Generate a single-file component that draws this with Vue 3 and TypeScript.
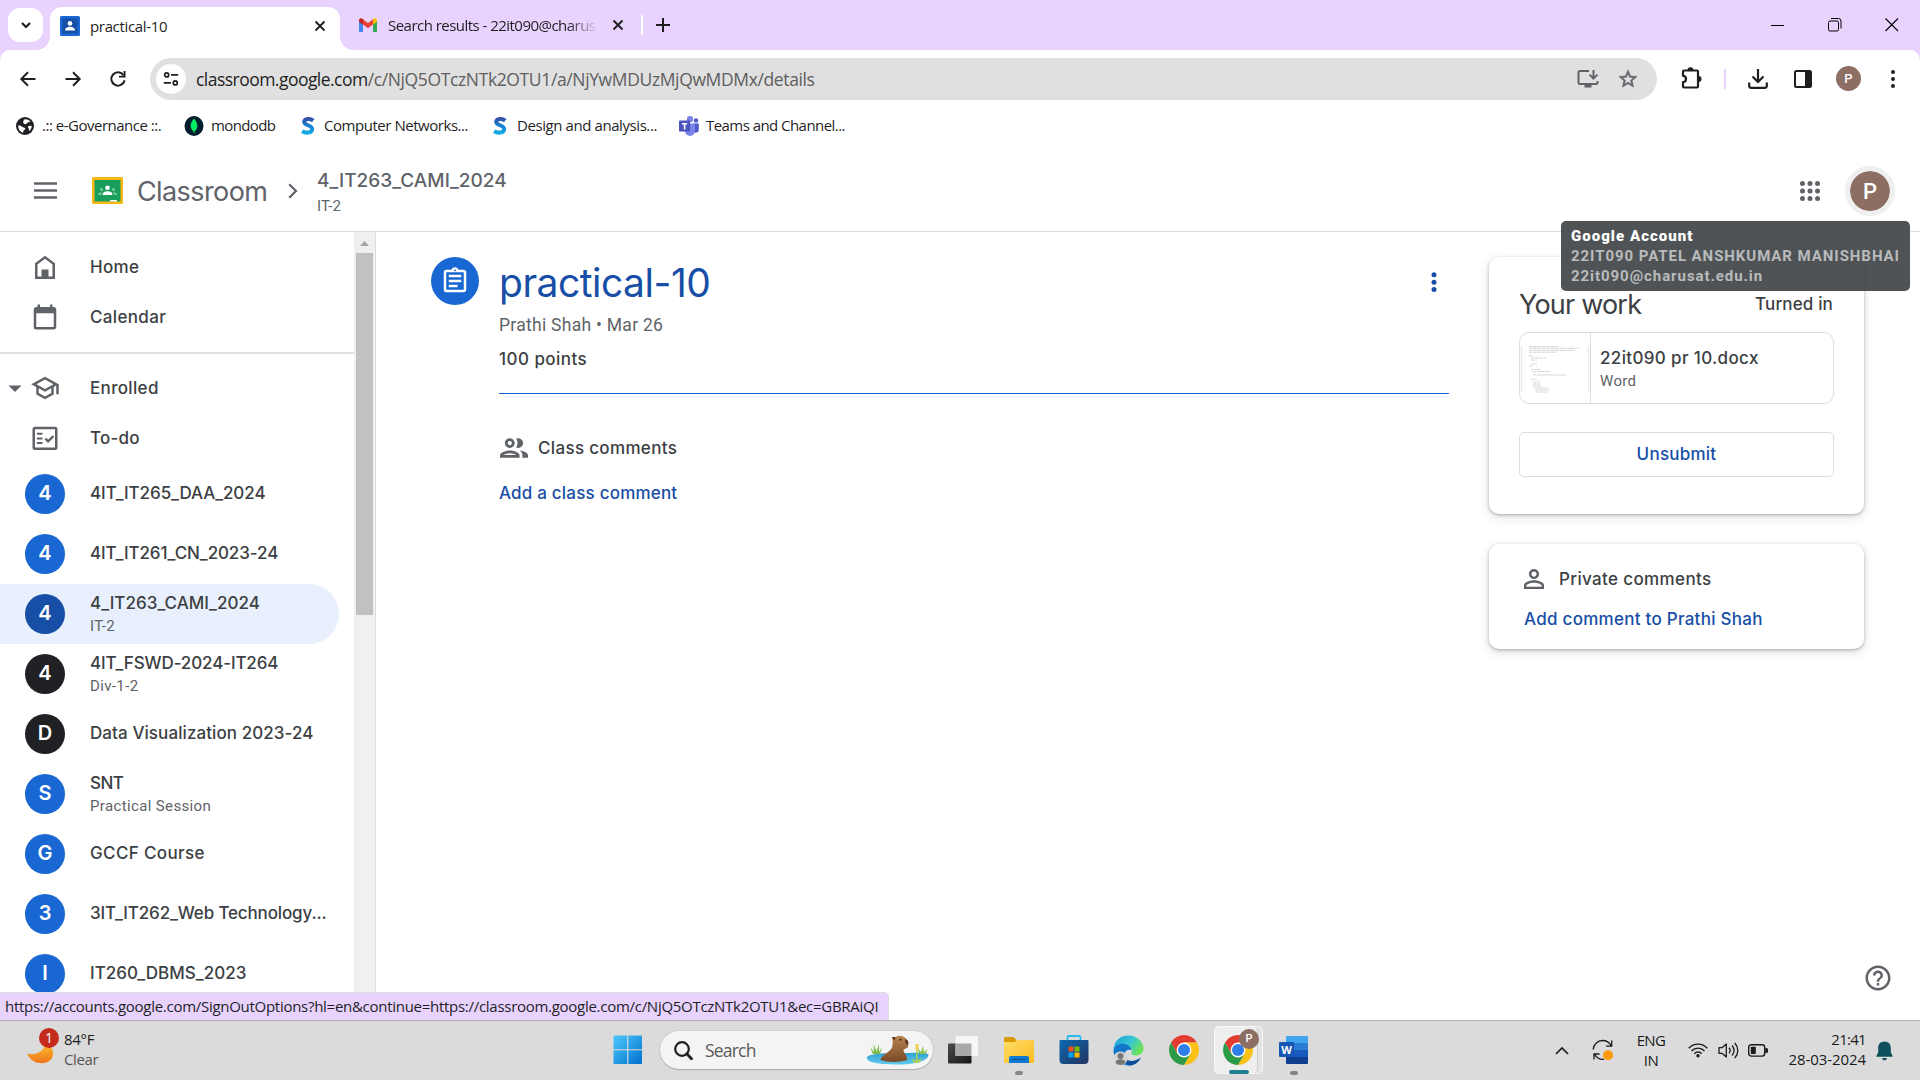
<script setup lang="ts">
interface Course {
  letter: string
  name: string
  sub?: string
  color: string
  spacing: number
  active?: boolean
}

const courses: Course[] = [
  { letter: '4', name: '4IT_IT265_DAA_2024', color: '#1967d2', spacing: -0.08 },
  { letter: '4', name: '4IT_IT261_CN_2023-24', color: '#1967d2', spacing: -0.1 },
  { letter: '4', name: '4_IT263_CAMI_2024', sub: 'IT-2', color: '#174ea6', spacing: 0.03, active: true },
  { letter: '4', name: '4IT_FSWD-2024-IT264', sub: 'Div-1-2', color: '#202124', spacing: -0.13 },
  { letter: 'D', name: 'Data Visualization 2023-24', color: '#202124', spacing: 0.08 },
  { letter: 'S', name: 'SNT', sub: 'Practical Session', color: '#1967d2', spacing: -0.6 },
  { letter: 'G', name: 'GCCF Course', color: '#1967d2', spacing: 0.36 },
  { letter: '3', name: '3IT_IT262_Web Technology...', color: '#1967d2', spacing: -0.14 },
  { letter: 'I', name: 'IT260_DBMS_2023', color: '#1967d2', spacing: 0.03 },
]

const gridDots = [4, 12, 20]
</script>

<template>
  <div class="screen">
    <!-- Tab strip -->
    <div class="tabs">
      <div class="tab-search">
        <svg width="12" height="12" viewBox="0 0 12 12"><path d="M2 4l4 4 4-4" fill="none" stroke="#1f1f1f" stroke-width="2.2" /></svg>
      </div>
      <div class="tab active-tab">
        <svg class="fav" width="20" height="20" viewBox="0 0 20 20">
          <rect width="20" height="20" rx="1.5" fill="#1967d2" /><rect x="2.5" y="2.5" width="15" height="15" fill="#174ea6" />
          <circle cx="10" cy="7.4" r="2.3" fill="#fff" /><path d="M5 14.5c0-2.6 2.6-3.7 5-3.7s5 1.1 5 3.7z" fill="#fff" />
        </svg>
        <span class="tab-title t1">practical-10</span>
        <svg class="x" width="12" height="12" viewBox="0 0 12 12"><path d="M1.5 1.5l9 9m0-9l-9 9" stroke="#1f1f1f" stroke-width="1.9" /></svg>
      </div>
      <div class="tab idle-tab">
        <svg class="fav" width="20" height="20" viewBox="0 0 20 20">
          <path d="M1 5v11.2c0 .5.4.8.8.8H5V8.6z" fill="#4285f4" /><path d="M19 5v11.2c0 .5-.4.8-.8.8H15V8.6z" fill="#34a853" />
          <path d="M5 4.2v5.4l5 3.7 5-3.7V4.2l-5 3.9z" fill="#ea4335" />
          <path d="M1 5v1.8l4 3V4.2l-.7-.5C2.900 2.700 1 3.500 1 5z" fill="#c5221f" />
          <path d="M19 5v1.800l-4 3V4.200l.7-.5C17.100 2.700 19 3.500 19 5z" fill="#fbbc04" />
        </svg>
        <span class="tab-title t2">Search results - 22it090@charus</span>
        <svg class="x" width="12" height="12" viewBox="0 0 12 12"><path d="M1.500 1.500l9 9m0-9l-9 9" stroke="#1f1f1f" stroke-width="1.900" /></svg>
      </div>
      <i class="tab-sep"></i>
      <svg class="plus" width="14" height="14" viewBox="0 0 14 14"><path d="M7 0v14M0 7h14" stroke="#1f1f1f" stroke-width="2" /></svg>
      <div class="win">
        <svg width="14" height="14" viewBox="0 0 14 14"><path d="M0 7.500h13" stroke="#000" /></svg>
        <svg width="14" height="14" viewBox="0 0 14 14"><g fill="none" stroke="#000"><rect x=".5" y="3" width="10" height="10" rx="1.500" /><path d="M3 .5h7.500a2.500 2.500 0 0 1 2.500 2.500v7.500" /></g></svg>
        <svg width="14" height="14" viewBox="0 0 14 14"><path d="M.5 .5l12.500 12.500M13 .5L.5 13" stroke="#000" stroke-width="1.100" /></svg>
      </div>
    </div>

    <!-- Toolbar -->
    <div class="toolbar">
      <div class="nav">
        <svg width="18" height="18" viewBox="0 0 18 18"><path d="M16.500 9H2.500M9 2.300L2.300 9 9 15.700" fill="none" stroke="#1f1f1f" stroke-width="2" /></svg>
        <svg width="18" height="18" viewBox="0 0 18 18"><path d="M1.500 9h14M9 2.300L15.700 9 9 15.700" fill="none" stroke="#1f1f1f" stroke-width="2" /></svg>
        <svg width="18" height="18" viewBox="0 0 18 18"><path d="M14.600 5.200A6.700 6.700 0 1 0 15.600 10.300" fill="none" stroke="#1f1f1f" stroke-width="2" /><path d="M16.500 1v6.600H10V5.700h4.600V1z" fill="#1f1f1f" /></svg>
      </div>
      <div class="omnibox">
        <span class="site-info">
          <svg width="16" height="16" viewBox="0 0 16 16"><g fill="none" stroke="#1f1f1f" stroke-width="1.700"><circle cx="3.700" cy="3.900" r="2" /><path d="M8 3.900h7.200M.8 11.900H8" /><circle cx="12.300" cy="11.900" r="2" /></g></svg>
        </span>
        <span class="url"><b>classroom.google.com</b>/c/NjQ5OTczNTk2OTU1/a/NjYwMDUzMjQwMDMx/details</span>
        <svg class="install" width="22" height="20" viewBox="0 0 22 20">
          <path d="M12 2H3a1.500 1.500 0 0 0-1.500 1.500v10A1.500 1.500 0 0 0 3 15h16a1.500 1.500 0 0 0 1.500-1.500V12" fill="none" stroke="#5f6368" stroke-width="2" />
          <path d="M7.500 15h7v3.500h-7z" fill="#5f6368" /><path d="M16.500 1v8M12.500 5.600l4 4 4-4" fill="none" stroke="#5f6368" stroke-width="2" />
        </svg>
        <svg class="star" width="22" height="22" viewBox="0 0 24 24"><path fill="#5f6368" stroke="#5f6368" stroke-width=".5" d="M22 9.240l-7.190-.62L12 2 9.190 8.630 2 9.240l5.460 4.730L5.820 21 12 17.270 18.180 21l-1.630-7.030L22 9.240zM12 15.400l-3.760 2.270 1-4.280-3.320-2.880 4.380-.38L12 6.100l1.710 4.040 4.380.38-3.320 2.880 1 4.280L12 15.400z" /></svg>
      </div>
      <div class="tools">
        <svg class="ext" width="24" height="24" viewBox="0 0 24 24"><path d="M4 5.500a1 1 0 0 1 1-1h13a1 1 0 0 1 1 1v15a1 1 0 0 1-1 1H5a1 1 0 0 1-1-1v-4.200c4-.7 4-5.900 0-6.600z" fill="none" stroke="#1f1f1f" stroke-width="2.200" /><path d="M8.500 4.200a3 3 0 0 1 6 0zM19.500 10a3 3 0 0 1 0 6z" fill="#1f1f1f" /></svg>
        <i class="tool-sep"></i>
        <svg class="dl" width="20" height="20" viewBox="0 0 20 20"><path d="M10 0v12M4.500 7.500L10 13l5.500-5.500M1.200 13.500v3.300a2 2 0 0 0 2 2h13.600a2 2 0 0 0 2-2v-3.300" fill="none" stroke="#1f1f1f" stroke-width="2.200" /></svg>
        <svg class="panel" width="18" height="18" viewBox="0 0 18 18"><rect x="1" y="1" width="16" height="16" rx="1.500" fill="none" stroke="#1f1f1f" stroke-width="2" /><path d="M11 1h6v16h-6z" fill="#1f1f1f" /></svg>
        <span class="mini-avatar">P</span>
        <svg class="kebab" width="6" height="20" viewBox="0 0 6 20"><g fill="#1f1f1f"><circle cx="3" cy="3" r="2" /><circle cx="3" cy="10" r="2" /><circle cx="3" cy="17" r="2" /></g></svg>
      </div>
    </div>

    <!-- Bookmarks -->
    <div class="bookmarks">
      <span class="bm b1"><svg width="18" height="18" viewBox="0 0 18 18"><circle cx="9" cy="9" r="9" fill="#202124" /><path d="M2.200 8.500c1.800-.3 2.800.2 4 1.300.9.900 2.300.6 2.900 1.400.6.800-.3 1.400-1.100 2-.8.600-.6 1.500-.8 2.600C4.200 15 2 12 2.200 8.500zM8.500 2.200C11 2 13 2.800 14.500 4.500l-2.300.7c-1.300.4-1.200 1.700-2.400 1.900-1.400.2-2.600-.6-2.600-2.100 0-1.200.6-1.800 1.300-2.800zM12 9.500c1-.9 2.600-.8 3.800-.3-.2 1.900-1 3.500-2.500 4.700-.6-1.200-.2-1.400-.6-2.300-.3-.7-1.100-1.200-.7-2.100z" fill="#fff" /></svg><span>.:: e-Governance ::.</span></span>
      <span class="bm b2"><svg width="20" height="20" viewBox="0 0 20 20"><ellipse cx="10" cy="10" rx="9.500" ry="10" fill="#001e2b" /><path d="M10 2.500c-2.300 2.700-3.300 5-3.300 7.200 0 2.500 1.200 4.300 2.800 5.600l.3 2.200h.5l.3-2.200c1.600-1.300 2.700-3.100 2.700-5.600 0-2.200-1-4.500-3.300-7.200z" fill="#00ed64" /></svg><span>mondodb</span></span>
      <span class="bm b3"><svg width="16" height="20" viewBox="0 0 16 20"><defs><linearGradient id="sg" gradientUnits="userSpaceOnUse" x1="0" y1="0" x2="0" y2="19"><stop offset="0" stop-color="#3b3f9c" /><stop offset=".5" stop-color="#1580d0" /><stop offset="1" stop-color="#10b7e8" /></linearGradient></defs><path d="M13.200 4.600C10.500 2.600 4.600 2.200 4.200 5.900 4 9.600 12.300 8.900 12.200 13.200 12.100 17.200 5.500 17.400 2 15.300" fill="none" stroke="url(#sg)" stroke-width="4" /></svg><span>Computer Networks...</span></span>
      <span class="bm b4"><svg width="16" height="20" viewBox="0 0 16 20"><path d="M13.200 4.600C10.500 2.600 4.600 2.200 4.200 5.900 4 9.600 12.300 8.900 12.200 13.200 12.100 17.200 5.500 17.400 2 15.300" fill="none" stroke="url(#sg)" stroke-width="4" /></svg><span>Design and analysis...</span></span>
      <span class="bm b5"><svg width="20" height="20" viewBox="0 0 20 20"><circle cx="11" cy="3.200" r="3.100" fill="#7b83eb" /><circle cx="17" cy="4.500" r="2.200" fill="#5059c9" /><path d="M14 7.500h5.800v6a3 3 0 0 1-5.800 1.200z" fill="#5059c9" /><path d="M6 7.500h10v7.500a5 5 0 0 1-10 0z" fill="#7b83eb" /><rect y="4.500" width="11" height="11" rx="1" fill="#4b53bc" /><path d="M3 7h5.200v1.500H6.400v5H4.800v-5H3z" fill="#fff" /></svg><span>Teams and Channel...</span></span>
    </div>

    <!-- Classroom header -->
    <header class="head">
      <svg class="burger" width="23" height="17" viewBox="0 0 23 17"><path d="M0 1.500h23M0 8.500h23M0 15.500h23" stroke="#5f6368" stroke-width="2.300" /></svg>
      <svg class="logo" width="31" height="27" viewBox="0 0 31 27">
        <rect width="31" height="27" rx="1.500" fill="#f6b811" /><rect x="2.500" y="3" width="26" height="21.500" fill="#1a9e5c" />
        <circle cx="15.500" cy="10.800" r="2.300" fill="#fff" /><path d="M10.500 18c0-2.800 2.600-3.700 5-3.700s5 .9 5 3.700z" fill="#fff" />
        <g fill="#7cc8a0"><circle cx="9.500" cy="12.500" r="1.600" /><circle cx="21.500" cy="12.500" r="1.600" /><path d="M6 18c0-2 1.600-2.900 4.200-2.700-.9.700-1.200 1.600-1.200 2.700zM25 18c0-2-1.600-2.900-4.200-2.700.9.700 1.200 1.600 1.200 2.700z" /></g>
        <path d="M18 23h7v1.500h-7z" fill="#fff" />
      </svg>
      <span class="brand">Classroom</span>
      <svg class="chev" width="10" height="16" viewBox="0 0 10 16"><path d="M1.200 1.200L8 8l-6.800 6.800" fill="none" stroke="#5f6368" stroke-width="2.200" /></svg>
      <div class="crumb"><span class="c1">4_IT263_CAMI_2024</span><span class="c2">IT-2</span></div>
      <svg class="apps" width="24" height="24" viewBox="0 0 24 24"><g fill="#5f6368"><template v-for="y in gridDots" :key="y"><circle v-for="x in gridDots" :key="x" :cx="x * 0.94 + 0.72" :cy="y * 0.94 + 0.72" r="2.500" /></template></g></svg>
      <span class="avatar">P</span>
    </header>

    <!-- Page body -->
    <div class="body">
      <nav class="side">
        <div class="side-list">
          <div class="row"><svg class="ic" width="30" height="30" viewBox="0 0 24 24"><path d="M5 20.500V9.500L12 4.200l7 5.300v11z" fill="none" stroke="#5f6368" stroke-width="2" /><path d="M9.200 14h5.600v6.500H9.200z" fill="#5f6368" /></svg><span class="r1">Home</span></div>
          <div class="row"><svg class="ic" width="30" height="30" viewBox="0 0 24 24"><path fill="#5f6368" d="M19 4h-1V2h-2v2H8V2H6v2H5c-1.110 0-2 .9-2 2v14a2 2 0 0 0 2 2h14c1.100 0 2-.9 2-2V6c0-1.100-.9-2-2-2zm0 16H5V9h14v11z" /></svg><span class="r1">Calendar</span></div>
          <div class="rule"></div>
          <div class="row enrolled"><svg class="tri" width="14" height="7" viewBox="0 0 14 7"><path d="M.5 .5h13L7 7z" fill="#5f6368" /></svg><svg class="ic" width="30" height="30" viewBox="0 0 24 24"><path fill="#5f6368" d="M12 3L1 9l4 2.180v6L12 21l7-3.820v-6l2-1.090V17h2V9L12 3zm6.820 6L12 12.720 5.180 9 12 5.280 18.820 9zM17 15.990l-5 2.730-5-2.730v-3.720L12 15l5-2.730v3.720z" /></svg><span class="r1">Enrolled</span></div>
          <div class="row"><svg class="ic" width="30" height="30" viewBox="0 0 24 24"><g fill="none" stroke="#5f6368"><rect x="3" y="4" width="18" height="16.500" rx="1" stroke-width="2" /><path d="M5.500 8.500H10M5.500 12.300H10M5.500 16H10" stroke-width="1.600" /><path d="M12.300 12.500l2.200 2.200 4.200-4.200" stroke-width="1.900" /></g></svg><span class="r2">To-do</span></div>
          <div v-for="c in courses" :key="c.name" class="course" :class="{ on: c.active }">
            <span class="disc" :style="{ background: c.color }">{{ c.letter }}</span>
            <span class="names">
              <span class="n1" :style="{ letterSpacing: c.spacing + 'px' }">{{ c.name }}</span>
              <span v-if="c.sub" class="n2">{{ c.sub }}</span>
            </span>
          </div>
        </div>
        <div class="scroll">
          <svg width="21" height="21" viewBox="0 0 21 21"><path d="M6 14l4.500-5 4.500 5z" fill="#a3a3a3" /></svg>
          <div class="thumb"></div>
        </div>
      </nav>

      <main class="main">
        <span class="badge"><svg width="30" height="30" viewBox="0 0 24 24"><path fill="#fff" d="M7 15h7v2H7zm0-4h10v2H7zm0-4h10v2H7zm12-4h-4.180C14.400 1.840 13.300 1 12 1c-1.300 0-2.400.84-2.820 2H5c-.14 0-.27.010-.4.040-.39.080-.74.280-1.010.550-.18.180-.33.400-.43.640-.1.230-.16.490-.16.770v14c0 .270.060.540.160.780s.25.450.430.640c.27.270.620.470 1.010.550.130.020.260.030.4.030h14c1.100 0 2-.9 2-2V5c0-1.100-.9-2-2-2zm-7-.25c.41 0 .75.340.75.750s-.34.750-.75.750-.75-.34-.75-.75.340-.75.750-.75zM19 19H5V5h14v14z" /></svg></span>
        <section class="detail">
          <div class="title-row"><h1>practical-10</h1><svg width="30" height="20" viewBox="0 0 30 20"><g fill="#174ea6"><circle cx="15" cy="2.700" r="2.500" /><circle cx="15" cy="10.200" r="2.500" /><circle cx="15" cy="17.500" r="2.500" /></g></svg></div>
          <div class="by">Prathi Shah • Mar 26</div>
          <div class="points">100 points</div>
          <div class="cc"><svg width="28" height="20" viewBox="2 5 20 14"><path fill="#5f6368" d="M9 13.750c-2.340 0-7 1.170-7 3.500V19h14v-1.750c0-2.330-4.660-3.500-7-3.500zM4.340 17c.84-.58 2.870-1.250 4.660-1.250s3.820.67 4.660 1.250H4.340zM9 12c1.930 0 3.500-1.570 3.500-3.500S10.930 5 9 5 5.500 6.570 5.500 8.500 7.070 12 9 12zm0-5c.83 0 1.500.67 1.500 1.500S9.830 10 9 10s-1.500-.67-1.500-1.500S8.170 7 9 7zm7.040 6.810c1.160.84 1.960 1.960 1.960 3.440V19h4v-1.750c0-2.020-3.500-3.170-5.960-3.440zM15 12c1.930 0 3.500-1.570 3.500-3.500S16.930 5 15 5c-.54 0-1.040.13-1.500.35.63.89 1 1.980 1 3.150s-.37 2.260-1 3.150c.46.22.96.35 1.500.35z" /></svg><span>Class comments</span></div>
          <div class="add">Add a class comment</div>
        </section>
        <aside class="cards">
          <div class="card work">
            <div class="work-head"><span class="yw">Your work</span><span class="ti">Turned in</span></div>
            <div class="file">
              <div class="thumbnail">
                <svg width="70" height="70" viewBox="0 0 70 70">
                  <path d="M1.500 13v46M68.500 13v46" stroke="#ececec" stroke-width="1.500" />
                  <g stroke="#c4c4c4" stroke-width=".7" stroke-dasharray="3 .5 5 .4"><path d="M9 13.500h29M9 15.300h50M9 17.300h46M9 19.200h28M9 23h4M11 25h15M11 27h6M11 31h6M9 33h4M11 36.500h10M13 38.500h17M13 42h33M11 46h6M13 49h7M13 51h7M13 53h9M14 55h15M15 57h14M16 59h12" /></g>
                </svg>
              </div>
              <div class="file-txt"><span class="f1">22it090 pr 10.docx</span><span class="f2">Word</span></div>
            </div>
            <div class="btn">Unsubmit</div>
          </div>
          <div class="card priv">
            <div class="ph"><svg width="30" height="30" viewBox="0 0 24 24"><path fill="#5f6368" d="M12 5.900c1.160 0 2.100.94 2.100 2.100s-.94 2.100-2.100 2.100S9.900 9.160 9.900 8s.94-2.100 2.100-2.100m0 9c2.970 0 6.100 1.460 6.100 2.100v1.100H5.900V17c0-.64 3.130-2.100 6.100-2.100M12 4C9.790 4 8 5.790 8 8s1.790 4 4 4 4-1.790 4-4-1.790-4-4-4zm0 9c-2.670 0-8 1.340-8 4v3h16v-3c0-2.660-5.330-4-8-4z" /></svg><span>Private comments</span></div>
            <div class="pa">Add comment to Prathi Shah</div>
          </div>
        </aside>
      </main>
    </div>

    <!-- Taskbar -->
    <footer class="task">
      <div class="weather">
        <div class="moon">
          <svg width="30" height="38" viewBox="0 0 30 38"><defs><linearGradient id="mg" x1="0" y1="0" x2="0" y2="1"><stop offset="0" stop-color="#f9b92d" /><stop offset="1" stop-color="#f0761b" /></linearGradient></defs><path d="M1 22.500c8 2.500 17-2 18-9 8 0 10 9 6.500 14.500-6 7-20 5.500-24.500-5.500z" fill="url(#mg)" /></svg>
          <span class="count">1</span>
        </div>
        <div class="wtxt"><span class="deg">84°F</span><span class="clr">Clear</span></div>
      </div>
      <div class="center">
        <span class="slot"><svg width="30" height="30" viewBox="0 0 30 30"><defs><linearGradient id="wg" x1="0" y1="0" x2="1" y2="1"><stop offset="0" stop-color="#4dc9fb" /><stop offset="1" stop-color="#0070cf" /></linearGradient></defs><path d="M1.500 .5h12.700v13.700H.5V1.500a1 1 0 0 1 1-1zM15.300 .5H28a1 1 0 0 1 1 1v12.700H15.300zM.5 15.300h13.700V29H1.500a1 1 0 0 1-1-1zM15.300 15.300H29V28a1 1 0 0 1-1 1H15.300z" fill="url(#wg)" /></svg></span>
        <div class="search">
          <svg width="19" height="19" viewBox="0 0 19 19"><circle cx="8" cy="8" r="6.800" fill="none" stroke="#1f1f1f" stroke-width="2.200" /><path d="M12.800 12.800l4.700 5" stroke="#1f1f1f" stroke-width="2.800" stroke-linecap="round" /></svg>
          <span>Search</span>
          <svg class="capy" width="64" height="30" viewBox="0 0 64 30">
            <defs><linearGradient id="cb" x1="0" y1="0" x2="0" y2="1"><stop offset="0" stop-color="#b98350" /><stop offset="1" stop-color="#7a4a26" /></linearGradient><linearGradient id="wt" x1="0" y1="0" x2="0" y2="1"><stop offset="0" stop-color="#2f9fcf" /><stop offset="1" stop-color="#62cbf0" /></linearGradient></defs>
            <path d="M1 22c3-3 14-4 30-4s29-1 31 1c2 3-4 10.500-30 10.500S0 26 1 22z" fill="url(#wt)" />
            <path d="M7 19L4 12l4 5-.5-8 3 7.500L13 9l0 8 3-5-2 7z" fill="#7db843" /><path d="M53 19l-1-6 3 4 2-6 1 6 4-3-3 5z" fill="#8cc34f" />
            <path d="M14.500 25c1.500-6 8.500-7 11-11.500 1.500-2.500 1-4.500 1.200-7.500l-.7-3.500 3.500-.2C32 0 37 .3 40 3.500c2.500 2 2.800 5 2 8.500-1.500 2-4.500 1.500-4.500 3.500 1 3.500 4 5.500 3.500 9.500-7 2.500-20 2.500-26.500 0z" fill="url(#cb)" />
            <circle cx="34.500" cy="4.800" r="1" fill="#2d1a0e" /><path d="M39 4.500c2.700 0 3.700 2 3.200 5-1.900.6-3.200-1.500-3.200-5z" fill="#5a341c" /><path d="M26 1.800l4 .6-2 3z" fill="#5a341c" />
            <path d="M46 24l4 1.500V14h1.500v11l4-1.500c-.5 3-2 4.500-4.700 4.500S46.500 27 46 24z" fill="#a9cf55" /><path d="M49 10l2-1.500 2 1.500-1 1.500 1 2-2 1.500-2-1.500 1-2z" fill="#f3cf4e" />
          </svg>
        </div>
        <span class="slot first"><svg width="31" height="30" viewBox="0 0 31 30"><defs><linearGradient id="tv" x1="0" y1="0" x2="1" y2="1"><stop offset="0" stop-color="#4a4a4a" /><stop offset="1" stop-color="#161616" /></linearGradient></defs><rect y="8.500" width="23.500" height="20" rx="1" fill="url(#tv)" /><rect x="7.500" y="1" width="22.500" height="20" rx="1" fill="#f6f6f6" /><path d="M7.500 8.500h16V21h-16z" fill="#a9a9a9" /></svg></span>
        <span class="slot run"><svg width="30" height="28" viewBox="0 0 30 28"><defs><linearGradient id="fg" x1="0" y1="0" x2="1" y2="1"><stop offset="0" stop-color="#ffdc6a" /><stop offset="1" stop-color="#fbbc1e" /></linearGradient></defs><path d="M0 2.500A1.500 1.500 0 0 1 1.500 1h8l3 3H29v6H0z" fill="#d99a05" /><path d="M0 6h10.500l2.500-2H29a1 1 0 0 1 1 1v22H1a1 1 0 0 1-1-1z" fill="url(#fg)" /><path d="M5 27v-5a2 2 0 0 1 2-2h16a2 2 0 0 1 2 2v5z" fill="#0f7ad0" /><path d="M8.500 23.500h13" stroke="#0b559c" stroke-width="1.200" /></svg></span>
        <span class="slot"><svg width="30" height="30" viewBox="0 0 30 30"><defs><linearGradient id="st" x1="0" y1="0" x2="1" y2="1"><stop offset="0" stop-color="#0c69b2" /><stop offset="1" stop-color="#24335f" /></linearGradient></defs><path d="M8.500 6V2.300A1.300 1.300 0 0 1 9.800 1h10.400a1.300 1.300 0 0 1 1.300 1.300V6" fill="none" stroke="#27bdf3" stroke-width="1.800" /><path d="M.5 6a1 1 0 0 1 1-1h27a1 1 0 0 1 1 1v19a4 4 0 0 1-4 4h-21a4 4 0 0 1-4-4z" fill="url(#st)" /><path d="M9.500 11.500H14.500v5h-5z" fill="#f25022" /><path d="M15.500 11.500h5v5h-5z" fill="#7fba00" /><path d="M9.500 17.500h5v5h-5z" fill="#00a4ef" /><path d="M15.500 17.500h5v5h-5z" fill="#ffb900" /></svg></span>
        <span class="slot"><svg width="31" height="31" viewBox="0 0 31 31"><defs><linearGradient id="e1" x1="0" y1="0" x2="1" y2=".5"><stop offset="0" stop-color="#1b9de2" /><stop offset=".6" stop-color="#37c8d0" /><stop offset="1" stop-color="#6be35b" /></linearGradient></defs><path d="M.5 16C.5 6 7 .5 15.500 .5S30.500 7 30.500 13.500c0 5-4 7-8 7-3 0-4.500-1-4-2.500 1-1.500 1-5.500-3.500-6.500C8 10 2 12 .5 16z" fill="url(#e1)" /><path d="M.5 16C1.500 9.500 8 8 12 9c4 1 6.500 4 6.500 6.500-2-1.500-7-.5-7 5 0 6 6 9.500 13 7C18 32.500 8 31 3.500 24 1.500 21 .5 18.500 .5 16z" fill="#1277c9" /><path d="M11.500 20c0 6 8 8.500 16.500 2.500-1.500 3.500-5.500 7.500-11 8-5-1-7-6-5.500-10.500z" fill="#0b4f9e" /><circle cx="7.500" cy="23.500" r="7" fill="#d5d5d5" /><circle cx="7.500" cy="21" r="3" fill="#777" /><path d="M2.500 28c0-3 2.500-3.800 5-3.800s5 .8 5 3.800c-3 2.500-7 2.500-10 0z" fill="#777" /></svg></span>
        <span class="slot"><svg width="30" height="30" viewBox="0 0 30 30"><g id="chrome"><path d="M2.010 7.500A15 15 0 0 1 27.990 7.500L15 7.500 8.500 18.750z" fill="#e33b2e" /><path d="M27.990 7.500A15 15 0 0 1 15 30L21.500 18.750 15 7.500z" fill="#fbc116" /><path d="M15 30A15 15 0 0 1 2.010 7.500L8.500 18.750 21.500 18.750z" fill="#2d9a47" /><circle cx="15" cy="15" r="7.400" fill="#fff" /><circle cx="15" cy="15" r="6" fill="#2f7de9" /></g></svg></span>
        <span class="slot"><span class="tile"><svg width="30" height="30" viewBox="0 0 30 30"><use href="#chrome" /></svg><i class="prof">P</i><i class="bar"></i></span></span>
        <span class="slot run"><svg width="30" height="28" viewBox="0 0 30 28"><path d="M7 1a1 1 0 0 1 1-1h20a1 1 0 0 1 1 1v6H7z" fill="#41a5ee" /><path d="M7 7h22v7H7z" fill="#2b7cd3" /><path d="M7 14h22v7H7z" fill="#185abd" /><path d="M7 21h22v6a1 1 0 0 1-1 1H8a1 1 0 0 1-1-1z" fill="#103f91" /><rect y="6" width="15" height="15" rx="1" fill="#1756b5" /><text x="7.500" y="17.500" text-anchor="middle" class="w">W</text></svg></span>
      </div>
      <div class="tray">
        <svg class="up" width="14" height="9" viewBox="0 0 14 9"><path d="M1 8l6-6 6 6" fill="none" stroke="#1b1b1b" stroke-width="1.700" /></svg>
        <svg class="sync" width="22" height="22" viewBox="0 0 22 22"><g fill="none" stroke="#1b1b1b" stroke-width="1.300"><path d="M1.200 10.500C1.500 5 6 1.500 10.500 1.500c4 0 7 2 8.700 5.300M19.700 1.500v5.700h-5.500M12 20.300c-4 .4-7.500-1.500-9.500-5.100M2 20.500v-5.500h5.500" /></g><circle cx="16" cy="16.200" r="5" fill="#ff9a0d" /></svg>
        <div class="lang"><span>ENG</span><span>IN</span></div>
        <svg class="wifi" width="20" height="16" viewBox="0 0 20 16"><g fill="none" stroke="#1b1b1b" stroke-width="1.400"><path d="M.7 6.200c5.100-5.400 13.500-5.400 18.600 0M3.500 9c3.600-3.800 9.400-3.800 13 0M6.300 11.700c2-2.200 5.400-2.200 7.400 0" /></g><circle cx="10" cy="13.800" r="1.700" fill="#1b1b1b" /></svg>
        <svg class="spk" width="21" height="17" viewBox="0 0 21 17"><g fill="none" stroke="#1b1b1b" stroke-width="1.300"><path d="M1 5.700h3L8.300 2v13L4 11.300H1z" stroke-linejoin="round" /><path d="M11 5.700c1.400 1.600 1.400 4 0 5.600M14 3.500c2.700 2.900 2.700 7.100 0 10M16.800 1c4 4.400 4 10.600 0 15" /></g></svg>
        <svg class="bat" width="20" height="13" viewBox="0 0 20 13"><rect x=".7" y=".7" width="16" height="11.400" rx="2.500" fill="none" stroke="#1b1b1b" stroke-width="1.400" /><rect x="2.800" y="2.800" width="5" height="7.200" rx=".8" fill="#1b1b1b" /><path d="M17.300 4h1.200a1.500 1.500 0 0 1 1.500 1.500v2a1.500 1.500 0 0 1-1.500 1.500h-1.200z" fill="#1b1b1b" /></svg>
        <div class="clock"><span class="hm">21:41</span><span class="dt">28-03-2024</span></div>
        <svg class="bell" width="17" height="20" viewBox="0 0 17 20"><path d="M8.500 .5c-4 0-6.300 2.800-6.300 6.300v4.500L.4 14.900c-.2.500 0 .9.600.9h15c.6 0 .8-.4.6-.9l-1.800-3.600V6.800C14.800 3.300 12.500.5 8.500.5zM6 17h5c-.3 1.500-1.200 2.300-2.500 2.300S6.300 18.500 6 17z" fill="#10505c" /></svg>
      </div>
    </footer>

    <!-- Overlays -->
    <div class="tip"><b>Google Account</b><span>22IT090 PATEL ANSHKUMAR MANISHBHAI</span><span>22it090@charusat.edu.in</span></div>
    <div class="status">https://accounts.google.com/SignOutOptions?hl=en&amp;continue=https://classroom.google.com/c/NjQ5OTczNTk2OTU1&amp;ec=GBRAiQI</div>
    <svg class="help" width="30" height="30" viewBox="0 0 24 24"><path fill="#5f6368" d="M11 18h2v-2h-2v2zm1-16C6.480 2 2 6.480 2 12s4.480 10 10 10 10-4.480 10-10S17.520 2 12 2zm0 18c-4.410 0-8-3.590-8-8s3.590-8 8-8 8 3.590 8 8-3.590 8-8 8zm0-14c-2.210 0-4 1.790-4 4h2c0-1.100.9-2 2-2s2 .9 2 2c0 2-3 1.750-3 5h2c0-2.250 3-2.500 3-5 0-2.210-1.790-4-4-4z" /></svg>
  </div>
</template>

<style>
body { margin: 0; overflow: hidden; }
</style>

<style scoped>
.screen { position: relative; width: 1920px; height: 1080px; display: flex; flex-direction: column; overflow: hidden; background: #fff; font-family: "Open Sans", "Noto Sans", sans-serif; font-size: 15px; color: #1f1f1f; }
.screen * { box-sizing: border-box; }
svg { display: block; flex: none; }
span { white-space: nowrap; }

.tabs { position: relative; z-index: 1; height: 50px; background: #e8d3ff; display: flex; align-items: center; }
.tab-search { width: 35px; height: 34px; margin-left: 8px; border-radius: 12px; background: #fff; display: flex; align-items: center; justify-content: center; }
.tab { display: flex; align-items: center; }
.active-tab { align-self: flex-end; position: relative; width: 290px; height: 43px; margin-left: 7px; padding: 0 0 6px 10px; border-radius: 12px 12px 0 0; background: #fff; }
.active-tab::before, .active-tab::after { content: ""; position: absolute; bottom: 0; width: 13px; height: 13px; }
.active-tab::before { left: -13px; background: radial-gradient(circle at 0 0, transparent 12.5px, #fff 13px); }
.active-tab::after { right: -13px; background: radial-gradient(circle at 100% 0, transparent 12.5px, #fff 13px); }
.tab-title { margin-left: 10px; line-height: 22px; }
.t1 { width: 224px; letter-spacing: -0.34px; }
.t2 { width: 210px; letter-spacing: -0.53px; -webkit-mask-image: linear-gradient(90deg, #000 180px, transparent 210px); mask-image: linear-gradient(90deg, #000 180px, transparent 210px); }
.idle-tab { margin-left: 18px; }
.idle-tab .x { margin-left: 14px; }
.tab-sep { width: 2px; height: 20px; margin-left: 17px; background: #fff; border-radius: 1px; }
.plus { margin-left: 13px; }
.win { margin-left: auto; margin-right: 21px; display: flex; gap: 43px; }

.toolbar { height: 58px; display: flex; padding-top: 8px; position: relative; border-radius: 10px 10px 0 0; box-shadow: 0 -10px 0 #e8d3ff; background: #fff; z-index: 0; }
.nav { display: flex; align-items: center; gap: 27px; width: 150px; padding-left: 19px; height: 42px; }
.omnibox { width: 1507px; height: 42px; border-radius: 21px; background: #e0e0e0; display: flex; align-items: center; }
.site-info { width: 30px; height: 30px; margin-left: 6px; border-radius: 50%; background: #fff; display: flex; align-items: center; justify-content: center; }
.url { margin-left: 10px; font-size: 17.5px; line-height: 24px; color: #5e5e5e; letter-spacing: -0.37px; width: 1381px; }
.url b { font-weight: 400; color: #1f1f1f; letter-spacing: -0.53px; }
.star { margin-left: 18px; }
.tools { display: flex; align-items: center; height: 42px; }
.ext { margin-left: 22px; margin-bottom: 3px; }
.tool-sep { width: 2px; height: 20px; margin-left: 21px; background: #e8d3ff; }
.dl { margin-left: 22px; }
.panel { margin-left: 26px; }
.mini-avatar { width: 25px; height: 25px; margin-left: 24px; border-radius: 50%; background: #8d6e63; color: #fff; display: flex; align-items: center; justify-content: center; font: 500 13px Roboto, sans-serif; margin-bottom: 2px; }
.kebab { margin-left: 29px; }

.bookmarks { height: 42px; padding: 0 0 6px 16px; display: flex; align-items: center; }
.bm { display: flex; align-items: center; line-height: 22px; }
.bm > span { margin: -2px 0 0 -1px; }
.b1 { width: 168px; gap: 9px; letter-spacing: -0.49px; }
.b2 { width: 116px; gap: 8px; letter-spacing: -0.62px; }
.b3 { width: 192px; gap: 9px; letter-spacing: -0.46px; }
.b4 { width: 187px; gap: 10px; letter-spacing: -0.42px; }
.b5 { gap: 8px; letter-spacing: -0.55px; }

.head { height: 82px; border-bottom: 1px solid #dadce0; display: flex; align-items: center; padding-left: 33.5px; color: #5f6368; }
.logo { margin-left: 35.5px; }
.brand { margin: 2px 0 0 14px; width: 132px; font: 400 27px/34px Inter, sans-serif; letter-spacing: -0.6px; }
.chev { margin-left: 19px; }
.crumb { margin: 4px 0 0 19px; display: flex; flex-direction: column; }
.c1 { font: 500 19px/26px Inter, sans-serif; letter-spacing: 0.02px; }
.c2 { font: 400 15px/24px Roboto, sans-serif; letter-spacing: 0.1px; }
.apps { margin-left: auto; }
.avatar { margin: 0 25px 0 23px; width: 50px; height: 50px; border: 5px solid #efefef; border-radius: 50%; background: #8d6e63; background-clip: padding-box; color: #fff; display: flex; align-items: center; justify-content: center; font: 500 22px Roboto, sans-serif; padding-top: 2px; }

.body { height: 788px; display: flex; }
.side { width: 376px; border-right: 1px solid #dadce0; display: flex; overflow: hidden; }
.side-list { width: 354px; padding-top: 10px; color: #3c4043; font: 450 17px/24px Inter, sans-serif; }
.row { height: 50px; display: flex; align-items: center; padding-left: 30px; }
.row > span { margin: -1px 0 0 30px; }
.r1 { letter-spacing: 0.34px; }
.r2 { letter-spacing: 0.2px; }
.rule { height: 2px; background: #e0e0e0; margin: 10px 0 9px; }
.enrolled { padding-left: 8px; }
.tri { margin-right: 8px; }
.course { height: 60px; display: flex; align-items: center; padding-left: 25px; width: 339px; border-radius: 0 30px 30px 0; }
.rule + .row + .row { margin-bottom: 1px; }
.on { background: #e8f0fe; }
.disc { width: 40px; height: 40px; border-radius: 50%; color: #fff; display: flex; align-items: center; justify-content: center; font-size: 20px; font-weight: 600; padding-bottom: 2px; }
.names { margin-left: 25px; display: flex; flex-direction: column; }
.n1:only-child { margin-top: -2px; }
.n2 { font: 400 15px/22px Roboto, sans-serif; color: #5f6368; letter-spacing: 0.36px; }
.scroll { width: 21px; background: #f0f0f0; display: flex; flex-direction: column; align-items: center; }
.thumb { width: 17px; height: 362px; background: #c1c1c1; }

.main { flex: 1; display: flex; padding: 25px 0 0 55px; font-family: Inter, sans-serif; font-size: 17px; font-weight: 450; color: #3c4043; }
.badge { width: 48px; height: 48px; border-radius: 50%; background: #1967d2; display: flex; align-items: center; justify-content: center; padding-bottom: 1px; }
.detail { width: 950px; margin-left: 20px; }
.title-row { height: 50px; display: flex; align-items: center; justify-content: space-between; }
h1 { margin: 2px 0 0; font: 400 39px/48px Inter, sans-serif; letter-spacing: -0.5px; color: #174ea6; }
.by { margin-top: 3px; font: 400 17.5px/30px Roboto, sans-serif; letter-spacing: 0.28px; color: #5f6368; }
.points { margin-top: 4px; height: 50px; line-height: 30px; letter-spacing: 0.46px; border-bottom: 1px solid #1967d2; }
.cc { margin-top: 39px; height: 30px; display: flex; align-items: center; gap: 10px; letter-spacing: 0.33px; padding-left: 1px; }
.add { margin-top: 15px; line-height: 30px; color: #174ea6; letter-spacing: 0.2px; }
.cards { margin-left: 40px; width: 375px; }
.card { border-radius: 10px; padding: 0 30px; background: #fff; box-shadow: 0 1px 3px rgba(60, 64, 67, .35), 0 3px 8px 1px rgba(60, 64, 67, .15); }
.work { height: 257px; padding-top: 27px; }
.work-head { height: 40px; display: flex; align-items: center; justify-content: space-between; }
.yw { font-size: 27px; font-weight: 400; letter-spacing: -0.8px; }
.ti { letter-spacing: 0.15px; margin-right: 1px; }
.file { margin-top: 8px; height: 72px; border: 1px solid #dadce0; border-radius: 10px; display: flex; }
.thumbnail { width: 71px; border-right: 1px solid #dadce0; }
.file-txt { margin-left: 9px; padding-top: 13px; display: flex; flex-direction: column; }
.f1 { line-height: 24px; letter-spacing: 0.36px; }
.f2 { font: 400 15px/22px Roboto, sans-serif; color: #5f6368; letter-spacing: 0.32px; }
.btn { margin-top: 28px; height: 45px; border: 1px solid #dadce0; border-radius: 5px; color: #174ea6; text-align: center; line-height: 42px; letter-spacing: 0.24px; }
.priv { height: 105px; margin-top: 30px; padding-top: 20px; }
.ph { display: flex; align-items: center; gap: 10px; height: 30px; letter-spacing: 0.36px; }
.pa { margin: 9px 0 0 5px; line-height: 32px; color: #174ea6; letter-spacing: 0.27px; white-space: nowrap; }

.task { height: 60px; border-top: 1px solid #b0b0b0; background: #dbdbdb; display: flex; color: #1b1b1b; }
.weather { width: 600px; padding-left: 26px; display: flex; }
.moon { position: relative; width: 30px; padding-top: 10px; }
.count { position: absolute; left: 13px; top: 7px; width: 20px; height: 20px; border-radius: 50%; background: #c42b1c; color: #fff; font-size: 14px; line-height: 20px; text-align: center; }
.wtxt { margin-left: 8px; padding-top: 8px; display: flex; flex-direction: column; line-height: 20px; }
.deg { letter-spacing: -0.3px; }
.clr { letter-spacing: -0.4px; color: #555; }
.center { display: flex; align-items: center; height: 58px; }
.slot { position: relative; width: 55px; height: 58px; display: flex; align-items: center; justify-content: center; }
.first { margin-left: 3px; }
.run::after { content: ""; position: absolute; left: 24px; bottom: 4px; width: 8px; height: 4px; border-radius: 2px; background: #868686; }
.search { width: 273px; height: 38px; margin-left: 5px; border-radius: 19px; background: #f4f4f4; box-shadow: 0 1px 1px #aaa, 0 0 0 1px #cfcfcf; display: flex; align-items: center; padding-left: 14px; }
.search span { margin-left: 12px; width: 161px; font-size: 17.5px; letter-spacing: -0.8px; color: #5a5a5a; line-height: 24px; }
.tile { position: relative; width: 49px; height: 48px; border-radius: 5px; background: #eeeeee; border: 1px solid #f8f8f8; display: flex; align-items: center; justify-content: center; padding-right: 2px; box-shadow: inset -4px 0 0 #e4e4e4, inset -5px 0 0 #cfcfcf; }
.prof { position: absolute; right: 3px; top: 2px; width: 20px; height: 20px; border-radius: 50%; background: #8d6e63; color: #fff; font: 500 11px/20px Roboto, sans-serif; text-align: center; }
.bar { position: absolute; left: 14px; bottom: -1px; width: 20px; height: 4px; border-radius: 2px; background: #1f7f91; }
.w { font: 700 11px "Open Sans", sans-serif; fill: #fff; }
.tray { margin-left: auto; display: flex; align-items: center; height: 58px; }
.sync { margin-left: 23px; }
.lang { margin: -1px 0 0 22px; width: 30px; display: flex; flex-direction: column; align-items: center; line-height: 20px; letter-spacing: -0.6px; }
.wifi { margin-left: 22px; }
.spk { margin-left: 10px; }
.bat { margin-left: 9px; }
.clock { margin: -2px 0 0 19px; width: 79px; display: flex; flex-direction: column; align-items: flex-end; line-height: 20px; }
.hm { letter-spacing: -0.7px; }
.dt { letter-spacing: -0.08px; }
.bell { margin: 2px 27px 0 10px; }

.tip { position: absolute; left: 1561px; top: 221px; width: 349px; height: 70px; padding: 5px 0 0 10px; border-radius: 5px; background: rgba(60, 64, 67, .9); display: flex; flex-direction: column; font: 700 15px/20px Roboto, sans-serif; color: #b9bbbd; letter-spacing: 0.94px; }
.tip b { color: #fff; letter-spacing: 1.03px; }
.status { position: absolute; left: 0; top: 992px; width: 889px; height: 28px; padding-left: 5px; border: solid #dcdcdc; border-width: 1px 1px 0 0; border-top-right-radius: 5px; background: #e8d3ff; line-height: 26px; letter-spacing: -0.28px; white-space: nowrap; }
.help { position: absolute; left: 1863px; top: 963px; }
</style>
